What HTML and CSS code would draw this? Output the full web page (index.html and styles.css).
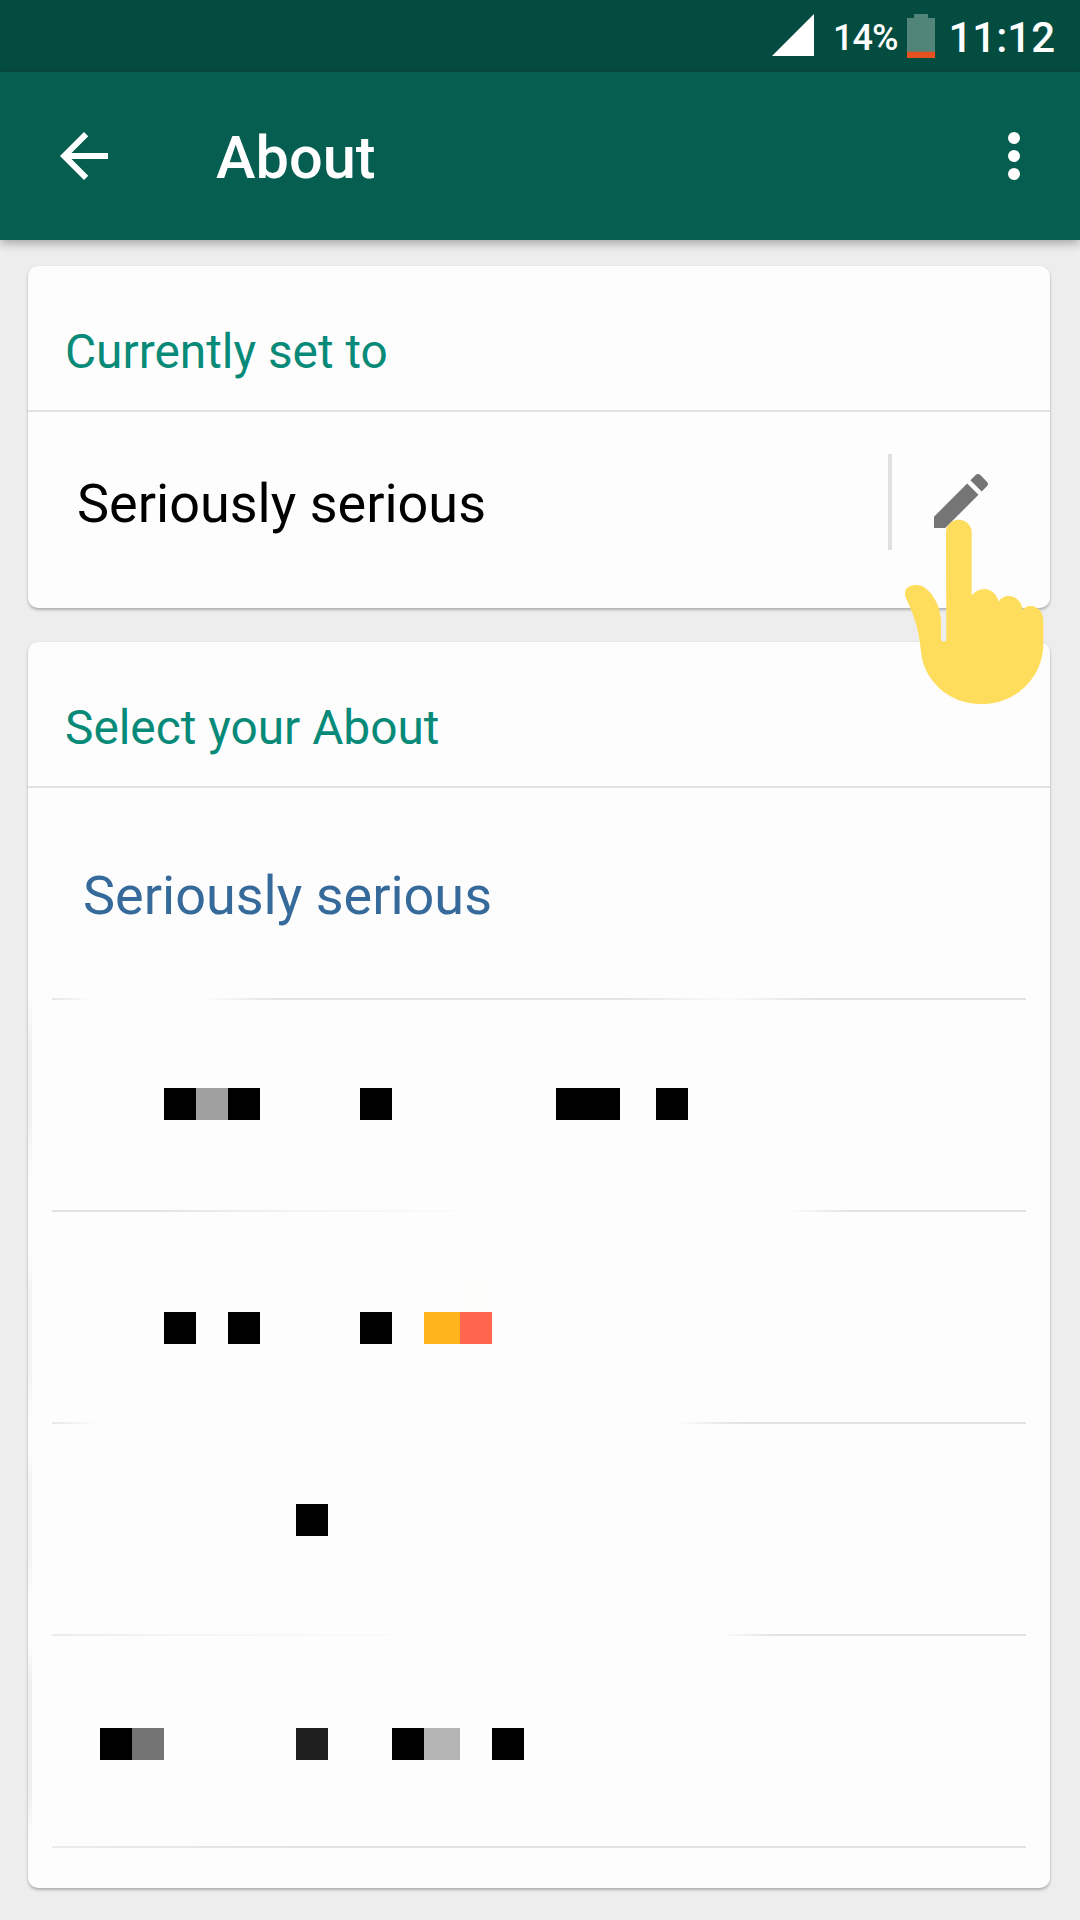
FILE: index.html
```html
<!DOCTYPE html>
<html lang="en">
<head>
<meta charset="utf-8">
<title>About</title>
<link rel="stylesheet" href="styles.css">
</head>
<body>
<div class="status-bar">
  <svg class="signal" viewBox="0 0 42 42"><path d="M42 0V42H0z" fill="#fff"/></svg>
  <span class="battery-level">14%</span>
  <svg class="battery" viewBox="0 0 28 44"><path d="M7 0h14v4h7v34H0V4h7z" fill="#52857a"/><path d="M0 37.7h28V44H0z" fill="#e5511f"/></svg>
  <span class="clock">11:12</span>
</div>
<header class="toolbar">
  <svg class="icon" viewBox="0 0 24 24"><path fill="#fff" d="M20 11H7.83l5.59-5.59L12 4l-8 8 8 8 1.41-1.41L7.83 13H20v-2z"/></svg>
  <h1 class="title">About</h1>
  <svg class="icon" viewBox="0 0 24 24" fill="#fff"><circle cx="12" cy="6" r="2"/><circle cx="12" cy="12" r="2"/><circle cx="12" cy="18" r="2"/></svg>
</header>
<main class="content">
  <section class="card">
    <h2 class="card-heading">Currently set to</h2>
    <div class="current">
      <span class="current-text">Seriously serious</span>
      <div class="edit">
        <svg class="icon" viewBox="0 0 24 24"><path fill="#757575" d="M3 17.25V21h3.75L17.81 9.94l-3.75-3.75L3 17.25zM20.71 7.04c.39-.39.39-1.02 0-1.41l-2.34-2.34c-.39-.39-1.02-.39-1.41 0l-1.83 1.83 3.75 3.75 1.83-1.83z"/></svg>
        <svg class="hand" viewBox="132 294 420 561"><path fill="#ffdd5c" d="M258 338A38.5 38.5 0 0 1 335 338V526C345 514 358 507 373 507C393 507 412 524 415 545C423 534 433 528 446 528C468 528 485 545 488 570C494 563 500 558 511 558C534 558 550 578 550 602V672C550 770 470 852 365 852C260 852 190 775 183 695C178 640 168 600 143 545C136 530 135 525 135 518C136 503 150 495 170 495C205 495 243 550 243 605V657a8 8 0 0 0 16 0z"/></svg>
      </div>
    </div>
  </section>
  <section class="card card-list">
    <h2 class="card-heading">Select your About</h2>
    <ul class="options">
      <li class="option line-a"><span class="option-text">Seriously serious</span></li>
      <li class="option line-b">
        <svg class="mosaic" viewBox="52 1000 974 210"><path d="M164 1088h32v32h-32zM228 1088h32v32h-32zM360 1088h32v32h-32zM556 1088h64v32h-64zM656 1088h32v32h-32z"/><path fill="#9f9f9f" d="M196 1088h32v32h-32z"/></svg>
      </li>
      <li class="option line-c">
        <svg class="mosaic" viewBox="52 1212 974 210"><path d="M164 1312h32v32h-32zM228 1312h32v32h-32zM360 1312h32v32h-32z"/><path fill="#ffb31c" d="M424 1312h36v32h-36z"/><path fill="#ff664d" d="M460 1312h32v32h-32z"/><path fill="#fcfcfa" d="M460 1280h32v32h-32z"/></svg>
      </li>
      <li class="option line-d">
        <svg class="mosaic" viewBox="52 1424 974 210"><path d="M296 1504h32v32h-32z"/></svg>
      </li>
      <li class="option line-e">
        <svg class="mosaic" viewBox="52 1636 974 210"><path d="M100 1728h32v32h-32zM392 1728h32v32h-32zM492 1728h32v32h-32z"/><path fill="#747474" d="M132 1728h32v32h-32z"/><path fill="#1f1f1f" d="M296 1728h32v32h-32z"/><path fill="#b5b5b5" d="M424 1728h36v32h-36z"/></svg>
      </li>
    </ul>
  </section>
</main>
</body>
</html>
```
FILE: styles.css
```css
* { box-sizing: border-box; }
body {
  margin: 0;
  width: 1080px;
  height: 1920px;
  overflow: hidden;
  background: #ededed;
  font-family: Roboto, sans-serif;
}
svg { display: block; flex: none; }
h1, h2, ul { margin: 0; padding: 0; }

.status-bar {
  display: flex;
  height: 72px;
  padding: 14px 25px 0 772px;
  background: #054c40;
  color: #fff;
  font-weight: 500;
  white-space: nowrap;
}
.signal { width: 42px; height: 42px; }
.battery-level {
  width: 75px;
  margin-left: 19px;
  font-size: 36px;
  line-height: 48px;
  letter-spacing: -1px;
}
.battery { width: 28px; height: 44px; }
.clock {
  margin-left: 13px;
  font-size: 42px;
  line-height: 47px;
}

.toolbar {
  position: relative;
  display: flex;
  align-items: center;
  height: 168px;
  padding: 0 30px 0 48px;
  background: #065e51;
  color: #fff;
  box-shadow: 0 3px 10px rgba(0, 0, 0, .32);
}
.icon { width: 72px; height: 72px; }
.title {
  flex: 1;
  margin-left: 96px;
  padding-top: 4px;
  font-size: 59.5px;
  font-weight: 500;
  line-height: 72px;
}

.content {
  display: flex;
  flex-direction: column;
  gap: 34px;
  padding: 26px 30px 0 28px;
}
.card {
  background: #fdfdfd;
  border-radius: 10px;
  box-shadow: 0 2px 3px rgba(0, 0, 0, .26), 0 0 2px rgba(0, 0, 0, .05);
}
.card-heading {
  height: 146px;
  padding: 22px 0 0 37px;
  border-bottom: 2px solid #e2e2e2;
  color: #088a79;
  font-size: 47.8px;
  font-weight: 400;
  line-height: 128px;
}
.current {
  display: flex;
  align-items: flex-start;
  height: 196px;
  padding-left: 49px;
}
.current-text {
  flex: 1;
  font-size: 54px;
  line-height: 184px;
  color: #000;
}
.edit {
  position: relative;
  width: 162px;
  height: 96px;
  margin-top: 42px;
  padding: 11px 0 0 33px;
  border-left: 4px solid #e0e0e0;
}
/* Pointing hand lies over both cards. */
.hand {
  position: absolute;
  z-index: 2;
  left: 12px;
  top: 64px;
  width: 140px;
  height: 187px;
}

.card-list {
  padding-bottom: 40px;
  background:
    linear-gradient(to bottom, transparent 350px, #f2f2f2 400px 480px, transparent 540px 610px, #f3f3f3 650px 730px, transparent 780px 810px, #f3f3f3 840px 910px, transparent 960px 1000px, #efefef 1040px 1150px, transparent 1200px) 0 0 / 4px 100% no-repeat,
    #fdfdfd;
}
.options { padding: 0 24px; list-style: none; }
.option {
  height: 212px;
  padding-bottom: 2px;
  background: 0 100% / 100% 2px no-repeat;
}
.option-text {
  display: block;
  padding-left: 31px;
  font-size: 54px;
  line-height: 216px;
  height: 210px;
  color: #356a9b;
}
.mosaic { width: 974px; height: 210px; }
.line-a { background-image: linear-gradient(to right, #e6e6e6, #fdfdfd 40px 150px, #e4e4e4 225px 570px, #fafafa 675px, #e2e2e2 765px); }
.line-b { background-image: linear-gradient(to right, #e2e2e2 90px, #f3f3f3 240px, #fdfdfd 450px 735px, #e2e2e2 800px); }
.line-c { background-image: linear-gradient(to right, #e8e8e8, #fdfdfd 45px 620px, #e2e2e2 690px); }
.line-d { background-image: linear-gradient(to right, #ebebeb, #f5f5f5 120px, #fcfcfc 390px 670px, #e2e2e2 725px); }
.line-e { background-image: linear-gradient(to right, #ececec, #e2e2e2 250px); }
```
